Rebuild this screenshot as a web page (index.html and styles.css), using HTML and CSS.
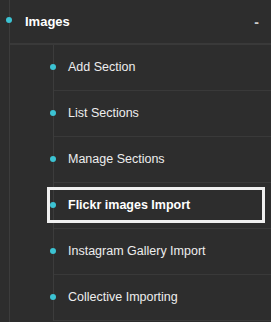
FILE: index.html
```html
<!DOCTYPE html>
<html lang="en">
<head>
    <meta charset="UTF-8">
    <meta name="viewport" content="width=device-width, initial-scale=1.0">
    <title>Images menu</title>
    <link rel="stylesheet" href="styles.css">
</head>
<body>
    <div class="menu">
        <div class="menu-head">
            <span class="dot"></span>
            <span class="menu-title">Images</span>
            <span class="toggle">-</span>
        </div>
        <ul class="sub-list">
            <li class="sub-item"><span class="dot"></span><a href="#">Add Section</a></li>
            <li class="sub-item"><span class="dot"></span><a href="#">List Sections</a></li>
            <li class="sub-item"><span class="dot"></span><a href="#">Manage Sections</a></li>
            <li class="sub-item active"><span class="dot"></span><a href="#">Flickr images Import</a></li>
            <li class="sub-item"><span class="dot"></span><a href="#">Instagram Gallery Import</a></li>
            <li class="sub-item"><span class="dot"></span><a href="#">Collective Importing</a></li>
        </ul>
    </div>
</body>
</html>
```

FILE: styles.css
```css
body {
    background-color: #2d2d2d;
    margin: 0;
    font-family: "Liberation Sans", Arial, sans-serif;
    height: 322px;
    overflow: hidden;
}
.menu {
    margin-left: 9px;
    border-left: 1px solid #3c3c3c;
    min-height: 322px;
}
.menu-head {
    position: relative;
    display: flex;
    align-items: center;
    height: 43px;
    padding-left: 15px;
    padding-right: 12px;
    border-bottom: 2px solid #393939;
}
.menu-head .dot {
    left: -4px;
    top: 17px;
}
.menu-title {
    color: #ffffff;
    font-weight: bold;
    font-size: 13px;
    flex: 1;
}
.toggle {
    color: #cccccc;
    font-weight: bold;
    font-size: 14px;
}
.dot {
    position: absolute;
    width: 6px;
    height: 6px;
    border-radius: 50%;
    background-color: #3cc3d3;
}
.sub-list {
    list-style: none;
    margin: 0 0 0 43px;
    padding: 0;
    border-left: 1px solid #3c3c3c;
}
.sub-item {
    position: relative;
    height: 45px;
    border-bottom: 1px solid #393939;
}
.sub-item .dot {
    left: -4px;
    top: 19px;
}
.sub-item a {
    display: flex;
    align-items: center;
    height: 100%;
    padding-left: 14px;
    padding-bottom: 1px;
    box-sizing: border-box;
    color: #eeeeee;
    font-size: 12.5px;
    text-decoration: none;
}
.sub-item.active a {
    font-weight: bold;
    color: #ffffff;
}
.sub-item.active::after {
    content: "";
    position: absolute;
    left: -7px;
    right: 6px;
    top: 4px;
    bottom: 5px;
    border: 3px solid #f0f0f0;
}
```
